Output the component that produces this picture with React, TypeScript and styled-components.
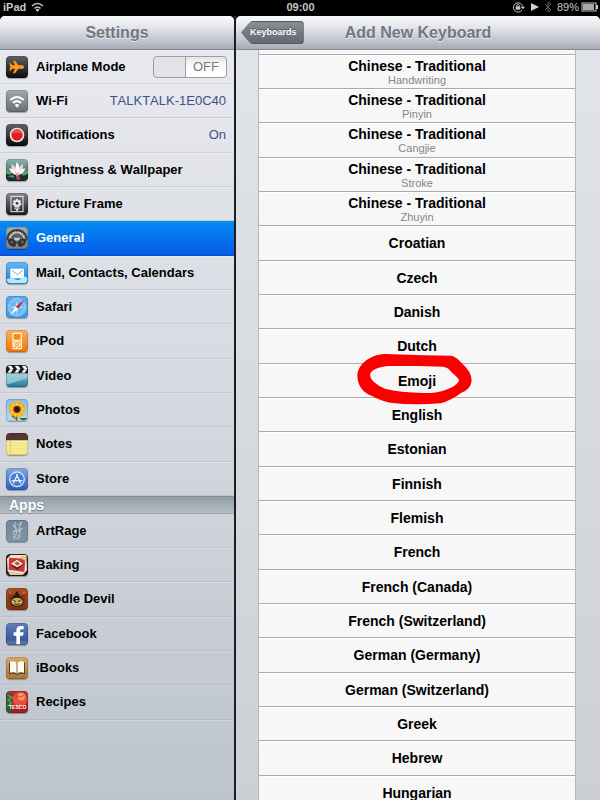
import React, { useState } from 'react';
import styled, { createGlobalStyle, css } from 'styled-components';

const GlobalStyle = createGlobalStyle`
  * { box-sizing: border-box; }
  body {
    margin: 0;
    background: #000;
    font-family: "Liberation Sans", Arial, sans-serif;
    font-kerning: none;
  }
`;

const Page = styled.div`
  display: flex;
  flex-direction: column;
  height: 100vh;
  background: #000;
`;

const StatusBar = styled.div`
  flex: none;
  display: grid;
  grid-template-columns: 1fr auto 1fr;
  align-items: center;
  height: 16px;
  padding: 0 2px 2px 3px;
  color: #c6c6c6;
  font-size: 11px;
  line-height: 14px;
  font-weight: bold;
`;

const StatusGroup = styled.div<{ $end?: boolean }>`
  display: flex;
  align-items: center;
  gap: 5px;
  justify-content: ${(p) => (p.$end ? 'flex-end' : 'flex-start')};
`;

const Battery = styled.div`
  display: flex;
  align-items: center;
  gap: 2px;
  font-weight: normal;
`;

const Panes = styled.div`
  flex: 1;
  min-height: 0;
  display: grid;
  grid-template-columns: 39% 1fr;
  gap: 2px;
  background: #1c1e24;
`;

const Pane = styled.section<{ $tone: 'side' | 'main' }>`
  display: flex;
  flex-direction: column;
  min-width: 0;
  min-height: 0;
  border-radius: 5px 5px 0 0;
  overflow: hidden;
  background: ${(p) =>
    p.$tone === 'side'
      ? 'linear-gradient(#e9ebf0, #d5d8df 50%, #bdc4cc)'
      : 'linear-gradient(#e2e6eb, #d7dadf 50%, #cccfd4)'};
  box-shadow: 0 0 0 5px #000;
  clip-path: inset(0);
`;

const PaneHeader = styled.header`
  flex: none;
  display: grid;
  grid-template-columns: 1fr auto 1fr;
  align-items: center;
  height: 34px;
  padding: 0 5px;
  border-bottom: 1px solid #858896;
  background: linear-gradient(#f9fafb, #e3e5ea 35%, #c6c8d1 70%, #a8aab8);
`;

const Title = styled.h1`
  grid-column: 2;
  margin: 0;
  color: #737780;
  font-size: 16px;
  line-height: 20px;
  text-shadow: 0 1px 0 #eceef2;
`;

const BackButton = styled.button`
  justify-self: start;
  height: 23px;
  padding: 0 7px 0 9px;
  border: 0;
  border-radius: 0 4px 4px 0;
  clip-path: polygon(0 50%, 8px 2px, 11px 0, 100% 0, 100% 100%, 11px 100%, 8px 21px);
  background: linear-gradient(#8d929a, #747981 50%, #636871);
  box-shadow: inset 0 1px 1px #555a63, inset -1px -1px 1px #555a63;
  color: #fff;
  font: bold 9px/23px "Liberation Sans", Arial, sans-serif;
  text-shadow: 0 -1px 0 #4c515a;
  cursor: pointer;
`;

const Scroller = styled.div`
  flex: 1;
  min-height: 0;
  overflow-y: auto;
  scrollbar-width: none;
`;

const List = styled.ul`
  margin: 0;
  padding: 0;
  list-style: none;
`;

const rowHeight = css`
  height: 34px;
  &:nth-child(3n) { height: 35px; }
`;

const SettingItem = styled.li<{ $selected?: boolean }>`
  ${rowHeight}
  display: flex;
  border-bottom: 1px solid ${(p) => (p.$selected ? '#0a4fd0' : 'rgba(150, 160, 175, 0.3)')};
  box-shadow: 0 1px 0 rgba(255, 255, 255, 0.25);
  color: ${(p) => (p.$selected ? '#fff' : '#000')};
  background: ${(p) => (p.$selected ? 'linear-gradient(#058cf4, #045ce8)' : 'none')};
`;

const settingLayout = css`
  flex: 1;
  display: flex;
  align-items: center;
  gap: 8px;
  min-width: 0;
  padding: 0 7px 0 6px;
  color: inherit;
  font-size: 13px;
  line-height: 16px;
  text-align: left;
  white-space: nowrap;
`;

const SettingLink = styled.a`
  ${settingLayout}
  text-decoration: none;
`;

const SettingToggle = styled.label`
  ${settingLayout}
`;

const SettingName = styled.span`
  flex: 1;
  font-weight: bold;
`;

const SettingValue = styled.span`
  color: #3d5287;
  padding-right: 1px;
`;

const SwitchBox = styled.span`
  display: grid;
  grid-template-columns: 32px 42px;
  align-items: center;
  height: 22px;
`;

const SwitchInput = styled.input`
  appearance: none;
  grid-area: 1 / 1 / 2 / 3;
  width: 74px;
  height: 22px;
  margin: 0;
  border: 1px solid #9b9da1;
  border-radius: 4px;
  background:
    linear-gradient(90deg, transparent 31px, #999ca1 31px, #999ca1 32px, transparent 32px),
    linear-gradient(90deg, #e2e3e6 31px, transparent 31px),
    linear-gradient(#e3e4e6, #fbfbfb 45%, #fff);
`;

const SwitchText = styled.span`
  grid-area: 1 / 2;
  color: #777a80;
  font-size: 13px;
  text-align: center;
  pointer-events: none;
`;

const GroupHeading = styled.h2`
  display: flex;
  align-items: center;
  height: 18px;
  margin: 0;
  padding: 0 9px;
  border-top: 1px solid #7f8a93;
  border-bottom: 1px solid #9da7b0;
  background: linear-gradient(#929ea7, #b4bdc6);
  color: #fff;
  font-size: 14px;
  line-height: 16px;
  text-shadow: 0 1px 1px #6f7983;
`;

const KeyboardTable = styled.div`
  margin: 0 24px 0 22px;
  padding-top: 4px;
  border: solid #b4b7bc;
  border-width: 0 1px;
  background: #f7f7f7;
`;

const KeyboardItem = styled.li`
  ${rowHeight}
  position: relative;
  border-top: 1px solid #a8aaad;
  box-shadow: inset 0 1px 0 #fff;
`;

const KeyboardButton = styled.button`
  display: flex;
  flex-direction: column;
  align-items: center;
  justify-content: center;
  width: 100%;
  height: 100%;
  padding: 0;
  border: 0;
  background: none;
  color: #000;
  font-family: inherit;
  cursor: pointer;
`;

const KeyboardName = styled.span`
  font-size: 14px;
  line-height: 16px;
  font-weight: bold;
`;

const KeyboardVariant = styled.span`
  color: #858585;
  font-size: 11px;
  line-height: 12px;
`;

const Highlight = styled.svg`
  position: absolute;
  top: 50%;
  left: 50%;
  z-index: 1;
  width: 120px;
  height: 54px;
  transform: translate(-50%, -50%);
  pointer-events: none;
`;

const IconFrame = styled.svg`
  flex: none;
  width: 22px;
  height: 22px;
  border-radius: 4px;
  box-shadow: 0 1px 1px rgba(0, 0, 0, 0.3);
`;

function Icon({ name, top, bottom, children }: {
  name: string; top: string; bottom: string; children: React.ReactNode;
}) {
  const id = `bg-${name}`;
  return (
    <IconFrame viewBox="0 0 66 66" aria-hidden="true">
      <defs>
        <linearGradient id={id} x1="0" y1="0" x2="0" y2="1">
          <stop offset="0" stopColor={top} />
          <stop offset="1" stopColor={bottom} />
        </linearGradient>
      </defs>
      <rect width="66" height="66" rx="10" fill={`url(#${id})`} />
      {children}
      <rect x="1" y="1" width="64" height="64" rx="10" fill="none" stroke="#000" strokeOpacity=".25" strokeWidth="2" />
    </IconFrame>
  );
}

const petals = (n: number, rx: number, ry: number, cy: number, fill: string) =>
  Array.from({ length: n }, (_, i) => (
    <ellipse key={i} cx="33" cy={cy} rx={rx} ry={ry} fill={fill} transform={`rotate(${(i * 360) / n} 33 31)`} />
  ));

const icons: Record<string, React.ReactNode> = {
  airplane: (
    <Icon name="airplane" top="#606264" bottom="#0b0b0c">
      <path d="M54 33c0-3-3-5-6-5H37L27 14h-6l6 14h-9l-4-6h-4l3 11-3 11h4l4-6h9l-6 14h6l10-14h11c3 0 6-2 6-5z" fill="#ff9a1c" />
    </Icon>
  ),
  wifi: (
    <Icon name="wifi" top="#a4a7ac" bottom="#696d74">
      <g fill="none" stroke="#fff" strokeWidth="6">
        <path d="M13 30q20-18 40 0" />
        <path d="M21 39q12-11 24 0" />
      </g>
      <path d="M26 45q7-6 14 0l-7 8z" fill="#fff" />
    </Icon>
  ),
  notifications: (
    <Icon name="notifications" top="#646464" bottom="#090909">
      <circle cx="33" cy="33" r="22" fill="#efe6e6" />
      <circle cx="33" cy="33" r="17" fill="#e01f25" />
      <path d="M17 31a16 16 0 0 1 32 0q-16-8-32 0z" fill="#ee4b4d" />
    </Icon>
  ),
  brightness: (
    <Icon name="brightness" top="#8fb5b2" bottom="#1f4a38">
      <path d="M0 40q18-10 35 0t31-5v22q-5 9-15 9H12Q0 66 0 54z" fill="#1b3129" />
      <path d="M0 34l22 5-10 8-12-3zM44 42l22-8v11l-14 5zM4 52l18-4 3 8z" fill="#5d9f74" />
      <g fill="#f6d3da">
        <path d="M16 14q17 9 18 34Q16 39 16 14zM51 14q-16 9-17 34 18-9 17-34z" />
        <path d="M33 8q12 16 3 39q-14-16-3-39z" fill="#fff" />
        <path d="M9 28q18 0 25 21Q15 47 9 28zM58 28q-18 0-24 21 19-2 24-21z" fill="#fff2f3" />
      </g>
      <path d="M28 38q6 8 12 0l-3 14h-6z" fill="#e69aa8" />
      <path d="M29 52h11l3 10H33z" fill="#b8445a" />
    </Icon>
  ),
  frame: (
    <Icon name="frame" top="#85878a" bottom="#17181a">
      <rect x="15" y="10" width="36" height="46" fill="none" stroke="#eee" strokeWidth="3" />
      {petals(7, 4, 5, 22, '#eee')}
      <circle cx="33" cy="31" r="8" fill="#eee" />
      <circle cx="33" cy="31" r="4" fill="#333" />
      <path d="M33 40v13M25 47q8-1 8 6 0-7 8-6" fill="none" stroke="#eee" strokeWidth="3" />
    </Icon>
  ),
  general: (
    <Icon name="general" top="#a9abad" bottom="#7c7f83">
      <path d="M5 38a28 28 0 0 1 56 0" fill="none" stroke="#3a3c3f" strokeWidth="8" />
      <path d="M11 38a22 22 0 0 1 44 0" fill="none" stroke="#e3e4e5" strokeWidth="7" strokeDasharray="4 3" />
      <path d="M14 38a19 19 0 0 1 38 0z" fill="#595c60" />
      <path d="M23 32h20l-4 7H27z" fill="#c9cbce" />
      <path d="M4 39l8-5 10 3 11 9 11-9 10-3 8 5-6 15-12 6-11-5-11 5-12-6z" fill="#303235" />
      <circle cx="17" cy="45" r="5" fill="#55585c" />
      <circle cx="49" cy="45" r="5" fill="#55585c" />
      <circle cx="33" cy="53" r="4" fill="#85888c" />
    </Icon>
  ),
  mail: (
    <Icon name="mail" top="#69b7f2" bottom="#167fd9">
      <path d="M2 52q15-6 25 0t20-3 17-1v5q-2 11-12 11H14Q4 64 2 52z" fill="#b5e8f8" />
      <rect x="13" y="20" width="41" height="29" fill="#fff" />
      <path d="M18 25l16 13 16-13" fill="none" stroke="#8fa2b4" strokeWidth="3" />
      <path d="M14 48l13-14M53 48L41 34" fill="none" stroke="#ccd6df" strokeWidth="2" />
    </Icon>
  ),
  safari: (
    <Icon name="safari" top="#61a9e7" bottom="#3c98ed">
      <circle cx="33" cy="34" r="27" fill="#6cb6ee" stroke="#a9d6f6" strokeWidth="2" />
      <circle cx="33" cy="34" r="22" fill="none" stroke="#c8e6fa" strokeWidth="4" strokeDasharray="2 5" />
      <path d="M33 13l4 17 17 4-17 4-4 17-4-17-17-4 17-4z" fill="#b8e2fa" />
      <path d="M56 10L37 39l-8-7z" fill="#b8333f" />
      <path d="M11 58l18-26 8 7z" fill="#f8fbff" />
    </Icon>
  ),
  ipod: (
    <Icon name="ipod" top="#f9b35b" bottom="#ef7507">
      <rect x="21" y="10" width="25" height="46" rx="2" fill="#f98c19" stroke="#fff2d9" strokeWidth="4" />
      <path d="M22 31h23" stroke="#fff2d9" strokeWidth="4" />
      <circle cx="33" cy="43" r="8" fill="none" stroke="#fff2d9" strokeWidth="4" />
      <circle cx="33" cy="43" r="3" fill="#ffe7bd" />
    </Icon>
  ),
  video: (
    <Icon name="video" top="#c6e8ef" bottom="#1f7b99">
      <path d="M1 25h64v14L1 59z" fill="#a5d5e0" opacity=".7" />
      <path d="M0 10Q0 0 10 0h46q10 0 10 10v15H0z" fill="#191919" />
      <path d="M5 2h11l7 10H12zM26 2h11l7 10H33zM47 2h11l7 10H54zM4 23h10l8-10H12zM25 23h10l8-10H33zM46 23h10l8-10H54z" fill="#f5f5f5" />
    </Icon>
  ),
  photos: (
    <Icon name="photos" top="#83bce9" bottom="#b8ddf0">
      <path d="M33 38q-4 12 0 27M33 59q-10 1-17-12 14 0 17 12M42 57q4 7 12 5t8-5" fill="#386c31" stroke="#28582b" strokeWidth="3" />
      {petals(13, 5, 13, 17, '#f6ad1f')}
      {petals(9, 3, 10, 19, '#ffc740')}
      <circle cx="33" cy="31" r="11" fill="#5a3015" />
      <circle cx="33" cy="31" r="6" fill="#26150d" />
    </Icon>
  ),
  notes: (
    <Icon name="notes" top="#fbf2a2" bottom="#f7ec86">
      <path d="M0 10Q0 0 10 0h46q10 0 10 10v12H0z" fill="#553633" />
      <path d="M2 30h62M2 38h62M2 46h62M2 54h62" stroke="#e5da85" strokeWidth="2" />
      <path d="M13 22v43" stroke="#dcb76e" strokeWidth="2" />
    </Icon>
  ),
  store: (
    <Icon name="store" top="#85a9e0" bottom="#285dba">
      <circle cx="33" cy="34" r="22" fill="#4d7fd0" stroke="#d5e4fa" strokeWidth="4" />
      <path d="M35 19L22 46M31 19l13 27M17 38h32" stroke="#e8f1ff" strokeWidth="4" />
    </Icon>
  ),
  artrage: (
    <Icon name="artrage" top="#71889a" bottom="#7e95a8">
      <path d="M28 6l-3 15 6 8-10 11 7 4-4 14M20 16q11 0 11 12-3 18 10 22M34 12l8 3 4-9-8 24 12-5-14 10 7 4-5 17M20 33h24M20 50l17 6" fill="none" stroke="#d5dde3" strokeWidth="2" />
    </Icon>
  ),
  baking: (
    <Icon name="baking" top="#3a2420" bottom="#2e1614">
      <path d="M3 14L14 3h47l2 46-12 13L5 52z" fill="#f1e4cf" />
      <path d="M9 11l49 3-3 40-47-7z" fill="#d23538" />
      <path d="M14 33l19-15 20 12-19 18z" fill="#52221b" />
      <path d="M15 30l18-13 18 12-17 11z" fill="#fbf2dd" />
      <path d="M25 29q8-13 17 0l-8 6z" fill="#a8653c" />
      <path d="M42 5l20 1-3 15-8-4z" fill="#e8c875" />
      <path d="M5 50l26 8 26-2-9 7H12z" fill="#d8cdb6" />
    </Icon>
  ),
  doodle: (
    <Icon name="doodle" top="#a85128" bottom="#7d3213">
      <path d="M8 11q4 15 15 10L33 9l10 12q11 5 15-10v42q-25 12-50 0z" fill="#7c3517" />
      <path d="M33 8q-5 15-18 25-7 22 18 24 25-2 18-24Q38 24 33 8z" fill="#2c180b" />
      <ellipse cx="33" cy="41" rx="17" ry="12" fill="#c9aa5b" />
      <path d="M21 36l9 5M45 36l-9 5M24 47q9 5 18 0" stroke="#4a2f12" strokeWidth="3" fill="none" />
      <circle cx="12" cy="14" r="4" fill="#c66a2e" />
      <circle cx="54" cy="14" r="4" fill="#c66a2e" />
    </Icon>
  ),
  facebook: (
    <Icon name="facebook" top="#627fb6" bottom="#2d4d91">
      <path d="M3 53h60v7q-3 5-9 5H12q-7 0-9-5z" fill="#5571a9" />
      <path d="M31 64V38h-8V28h8v-6q0-13 14-13h8v10h-5q-6 0-6 5v4h11l-2 10h-9v26z" fill="#fff" />
    </Icon>
  ),
  ibooks: (
    <Icon name="ibooks" top="#d9a967" bottom="#a87437">
      <path d="M9 17q15-4 24 4 9-8 24-4v35q-15-4-24 3-9-7-24-3z" fill="#5d4226" />
      <path d="M12 14q14-4 21 5v31q-8-6-21-3zM54 14q-14-4-21 5v31q8-6 21-3z" fill="#fffdf2" />
      <path d="M33 18v34" stroke="#81705a" strokeWidth="3" />
    </Icon>
  ),
  recipes: (
    <Icon name="recipes" top="#cc2b28" bottom="#a51818">
      <path d="M0 8q14-8 21 5l-5 52H10Q0 64 0 54z" fill="#2d5e34" />
      <path d="M4 12l14 7-12 9 11 8-13 10" fill="none" stroke="#6b9a5c" strokeWidth="4" />
      <circle cx="42" cy="25" r="22" fill="#e8503a" />
      <circle cx="46" cy="17" r="11" fill="#f39a6c" />
      <path d="M28 12q13 12 26 0" stroke="#a82d22" strokeWidth="2" fill="none" />
      <text x="35" y="53" textAnchor="middle" fontSize="15" fontWeight="bold" fill="#fff">TESCO</text>
    </Icon>
  ),
};

type Setting = { icon: string; name: string; value?: string; toggle?: boolean };

const settings: Setting[] = [
  { icon: 'airplane', name: 'Airplane Mode', toggle: true },
  { icon: 'wifi', name: 'Wi-Fi', value: 'TALKTALK-1E0C40' },
  { icon: 'notifications', name: 'Notifications', value: 'On' },
  { icon: 'brightness', name: 'Brightness & Wallpaper' },
  { icon: 'frame', name: 'Picture Frame' },
  { icon: 'general', name: 'General' },
  { icon: 'mail', name: 'Mail, Contacts, Calendars' },
  { icon: 'safari', name: 'Safari' },
  { icon: 'ipod', name: 'iPod' },
  { icon: 'video', name: 'Video' },
  { icon: 'photos', name: 'Photos' },
  { icon: 'notes', name: 'Notes' },
  { icon: 'store', name: 'Store' },
];

const apps: Setting[] = [
  { icon: 'artrage', name: 'ArtRage' },
  { icon: 'baking', name: 'Baking' },
  { icon: 'doodle', name: 'Doodle Devil' },
  { icon: 'facebook', name: 'Facebook' },
  { icon: 'ibooks', name: 'iBooks' },
  { icon: 'recipes', name: 'Recipes' },
];

const keyboards: { name: string; variant?: string }[] = [
  ...['Handwriting', 'Pinyin', 'Cangjie', 'Stroke', 'Zhuyin'].map((variant) => ({
    name: 'Chinese - Traditional',
    variant,
  })),
  ...[
    'Croatian', 'Czech', 'Danish', 'Dutch', 'Emoji', 'English', 'Estonian', 'Finnish', 'Flemish',
    'French', 'French (Canada)', 'French (Switzerland)', 'German (Germany)', 'German (Switzerland)',
    'Greek', 'Hebrew', 'Hungarian',
  ].map((name) => ({ name })),
];

function SettingRow({ item }: { item: Setting }) {
  const [on, setOn] = useState(false);
  const selected = item.name === 'General';
  return (
    <SettingItem $selected={selected}>
      {item.toggle ? (
        <SettingToggle>
          {icons[item.icon]}
          <SettingName>{item.name}</SettingName>
          <SwitchBox>
            <SwitchInput type="checkbox" role="switch" checked={on} onChange={() => setOn(!on)} />
            <SwitchText>{on ? 'ON' : 'OFF'}</SwitchText>
          </SwitchBox>
        </SettingToggle>
      ) : (
        <SettingLink href="#" aria-current={selected ? 'page' : undefined}>
          {icons[item.icon]}
          <SettingName>{item.name}</SettingName>
          {item.value && <SettingValue>{item.value}</SettingValue>}
        </SettingLink>
      )}
    </SettingItem>
  );
}

export default function App() {
  return (
    <Page>
      <GlobalStyle />
      <StatusBar>
        <StatusGroup>
          <span>iPad</span>
          <svg width="13" height="10" viewBox="0 0 26 20" aria-label="Wi-Fi signal">
            <path d="M2 8q11-10 22 0M7 13q6-6 12 0" fill="none" stroke="#c6c6c6" strokeWidth="3" />
            <path d="M9 15q4-3 8 0l-4 5z" fill="#c6c6c6" />
          </svg>
        </StatusGroup>
        <span>09:00</span>
        <StatusGroup $end>
          <svg width="13" height="12" viewBox="0 0 39 36" aria-label="Rotation locked">
            <path d="M30 27A14 14 0 1 1 32 17" fill="none" stroke="#c6c6c6" strokeWidth="3" />
            <path d="M26 17h13l-6 8z" fill="#c6c6c6" />
            <rect x="11" y="16" width="14" height="10" fill="#c6c6c6" />
            <path d="M14 17v-4q4-6 8 0v4" fill="none" stroke="#c6c6c6" strokeWidth="3" />
          </svg>
          <svg width="9" height="10" viewBox="0 0 9 10" aria-label="Playing">
            <path d="M1 1l8 4-8 4z" fill="#d2d2d2" />
          </svg>
          <svg width="8" height="12" viewBox="0 0 8 12" aria-label="Bluetooth">
            <path d="M1 3l6 6-3 2V1l3 2-6 6" fill="none" stroke="#606060" />
          </svg>
          <Battery>
            <span>89%</span>
            <svg width="17" height="10" viewBox="0 0 17 10" aria-label="Battery">
              <rect x="1" y="1" width="14" height="8" fill="none" stroke="#c6c6c6" />
              <rect x="2" y="2" width="11" height="6" fill="#a8a8a8" />
              <path d="M16 3v4" stroke="#c6c6c6" strokeWidth="2" />
            </svg>
          </Battery>
        </StatusGroup>
      </StatusBar>
      <Panes>
        <Pane $tone="side">
          <PaneHeader>
            <Title>Settings</Title>
          </PaneHeader>
          <Scroller as="nav">
            <List>{settings.map((s) => <SettingRow key={s.name} item={s} />)}</List>
            <GroupHeading>Apps</GroupHeading>
            <List>{apps.map((s) => <SettingRow key={s.name} item={s} />)}</List>
          </Scroller>
        </Pane>
        <Pane $tone="main">
          <PaneHeader>
            <BackButton>Keyboards</BackButton>
            <Title>Add New Keyboard</Title>
          </PaneHeader>
          <Scroller>
            <KeyboardTable>
              <List>
                {keyboards.map((k) => (
                  <KeyboardItem key={k.name + (k.variant ?? '')}>
                    <KeyboardButton>
                      <KeyboardName>{k.name}</KeyboardName>
                      {k.variant && <KeyboardVariant>{k.variant}</KeyboardVariant>}
                    </KeyboardButton>
                    {k.name === 'Emoji' && (
                      <Highlight viewBox="51 72 360 162" aria-hidden="true">
                        <path
                          fill="#fb0000"
                          fillRule="evenodd"
                          d="M52 135C54 104 90 72 138 72L248 76L335 77Q350 82 364 98Q396 126 395 152Q392 178 364 188Q335 210 302 220Q220 227 150 218Q120 212 98 199Q52 182 52 135ZM90 135Q92 114 145 108H240L310 110Q325 112 336 128Q358 145 357 153Q350 168 318 179Q290 190 250 189Q180 187 135 176Q92 158 90 135Z"
                        />
                      </Highlight>
                    )}
                  </KeyboardItem>
                ))}
              </List>
            </KeyboardTable>
          </Scroller>
        </Pane>
      </Panes>
    </Page>
  );
}
